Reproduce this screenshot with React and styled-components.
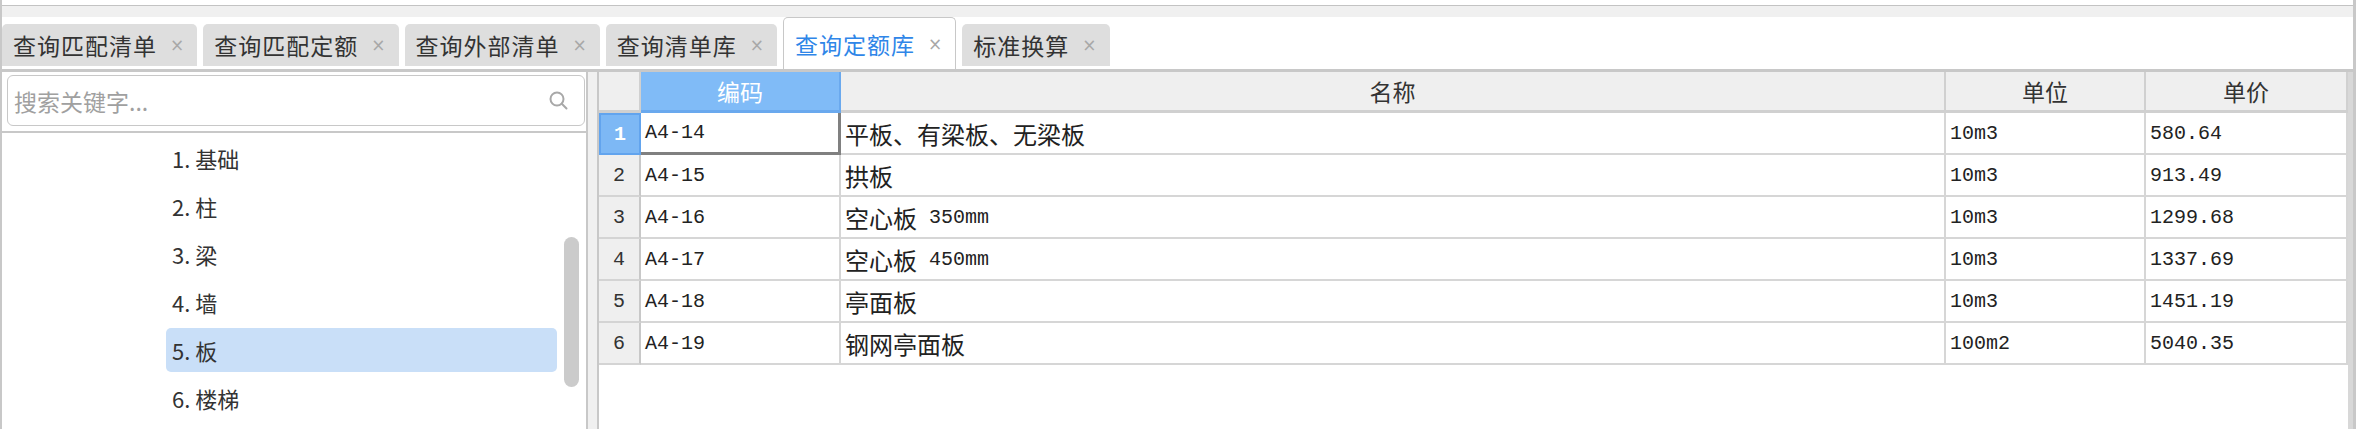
import React from "react";
import styled, { createGlobalStyle } from "styled-components";

const GlobalStyle = createGlobalStyle`
  html, body {
    margin: 0;
    padding: 0;
    background: #fff;
  }
  body {
    font-family: "Noto Sans CJK SC", "Noto Sans", sans-serif;
    color: #333;
  }
  * { box-sizing: border-box; }
`;

const Page = styled.div`
  width: 2356px;
  height: 429px;
  overflow: hidden;
  display: flex;
  flex-direction: column;
  border-left: 2px solid #c8c8c8;
  border-right: 3px solid #c8c8c8;
`;

const TopBox = styled.div`
  flex: none;
  height: 6px;
  border-bottom: 1px solid #c3c3c3;
`;

const Strip = styled.div`
  flex: none;
  height: 11px;
  background: #f0f0f0;
`;

const TabBar = styled.div`
  flex: none;
  height: 52px;
  display: flex;
  align-items: flex-end;
  gap: 6px;
`;

const Tab = styled.div`
  display: flex;
  align-items: center;
  height: ${p => (p.active ? 52 : 42)}px;
  margin-bottom: ${p => (p.active ? 0 : 3)}px;
  padding: 0 13px 0 11px;
  border-radius: 5px 5px 0 0;
  background: ${p => (p.active ? "#fff" : "#dedede")};
  border: ${p => (p.active ? "1px solid #c8c8c8" : "none")};
  border-bottom: none;
  color: ${p => (p.active ? "#2f86e8" : "#333")};
  font-size: 23px;
  letter-spacing: 1px;
  white-space: nowrap;
`;

const Close = styled.span`
  margin-left: 13px;
  color: #a8a8a8;
  font-family: "DejaVu Sans", sans-serif;
  font-size: 17px;
  letter-spacing: 0;
`;

const Main = styled.div`
  flex: 1;
  display: flex;
  border-top: 3px solid #c8c8c8;
  min-height: 0;
`;

const LeftPanel = styled.div`
  flex: none;
  width: 586px;
  display: flex;
  flex-direction: column;
  border-right: 2px solid #c8c8c8;
`;

const SearchWrap = styled.div`
  padding: 3px 1px 5px 5px;
`;

const SearchBox = styled.div`
  height: 51px;
  display: flex;
  align-items: center;
  justify-content: space-between;
  padding: 0 15px 0 6px;
  border: 1px solid #c8c8c8;
  border-radius: 6px;
  color: #a0a0a0;
  font-size: 23px;
`;

const List = styled.div`
  position: relative;
  flex: 1;
  display: flex;
  flex-direction: column;
  gap: 4px;
  padding-top: 3px;
  border-top: 2px solid #c8c8c8;
`;

const Item = styled.div`
  display: flex;
  align-items: center;
  height: 44px;
  width: 391px;
  margin-left: 164px;
  padding-left: 6px;
  border-radius: 5px;
  font-size: 22px;
  color: #333;
  background: ${p => (p.selected ? "#c9dff8" : "transparent")};
`;

const Thumb = styled.div`
  position: absolute;
  left: 562px;
  top: 104px;
  width: 15px;
  height: 150px;
  border-radius: 8px;
  background: #cbcbcb;
`;

const Splitter = styled.div`
  flex: none;
  width: 11px;
  background: #f0f0f0;
  border-right: 2px solid #c8c8c8;
`;

const GridArea = styled.div`
  flex: none;
  width: 1749px;
`;

const Grid = styled.div`
  display: grid;
  grid-template-columns: 42px 200px 1105px 200px 202px;
  grid-auto-rows: 42px;
  grid-template-rows: 41px;
`;

const HeadCell = styled.div`
  display: flex;
  align-items: center;
  justify-content: center;
  background: ${p => (p.selected ? "#80bbf7" : "#efefef")};
  color: ${p => (p.selected ? "#fff" : "#333")};
  border-right: 2px solid ${p => (p.selected ? "#6aa9ee" : "#d0d0d0")};
  border-bottom: 3px solid ${p => (p.selected ? "#6aa9ee" : "#d0d0d0")};
  font-size: 23px;
`;

const RowHead = styled.div`
  display: flex;
  align-items: center;
  justify-content: center;
  background: ${p => (p.selected ? "#7db8f5" : "#efefef")};
  color: ${p => (p.selected ? "#fff" : "#333")};
  border: ${p => (p.selected ? "2px solid #62a4ee" : "none")};
  border-right: 2px solid ${p => (p.selected ? "#62a4ee" : "#c8c8c8")};
  border-bottom: 2px solid ${p => (p.selected ? "#62a4ee" : "#d4d4d4")};
  font-family: "Liberation Mono", monospace;
  font-weight: ${p => (p.selected ? 700 : 400)};
  font-size: 20px;
`;

const Cell = styled.div`
  display: flex;
  align-items: center;
  padding-left: 4px;
  white-space: pre;
  color: #222;
  font-size: 24px;
  border-right: ${p => (p.active ? "3px solid #808080" : "2px solid #d6d6d6")};
  border-bottom: ${p => (p.active ? "3px solid #808080" : "2px solid #d6d6d6")};
`;

const Latin = styled.span`
  font-family: "Liberation Mono", monospace;
  font-size: 20px;
`;

const RightGutter = styled.div`
  flex: none;
  width: 5px;
  background: #d8d8d8;
`;

const SearchIcon = () => (
  <svg width="21" height="21" viewBox="0 0 21 21" fill="none" stroke="#a8a8a8" strokeWidth="2">
    <circle cx="9" cy="9" r="6.5" />
    <path d="M13.8 13.8 L18.5 18.5" strokeLinecap="round" />
  </svg>
);

const tabs = ["查询匹配清单", "查询匹配定额", "查询外部清单", "查询清单库", "查询定额库", "标准换算"];
const categories = ["1. 基础", "2. 柱", "3. 梁", "4. 墙", "5. 板", "6. 楼梯"];
const columns = ["编码", "名称", "单位", "单价"];
const rows = [
  ["A4-14", "平板、有梁板、无梁板", "10m3", "580.64"],
  ["A4-15", "拱板", "10m3", "913.49"],
  ["A4-16", "空心板 350mm", "10m3", "1299.68"],
  ["A4-17", "空心板 450mm", "10m3", "1337.69"],
  ["A4-18", "亭面板", "10m3", "1451.19"],
  ["A4-19", "钢网亭面板", "100m2", "5040.35"],
];

// ascii runs get the narrow mono font, the rest stays CJK
const mixed = (text) =>
  text.split(/([\x20-\x7e]+)/).filter(Boolean).map((part, i) =>
    /^[\x20-\x7e]+$/.test(part) ? <Latin key={i}>{part}</Latin> : <span key={i}>{part}</span>
  );

export default function App() {
  return (
    <>
      <GlobalStyle />
      <Page>
        <TopBox />
        <Strip />
        <TabBar>
          {tabs.map((t, i) => (
            <Tab key={t} active={i === 4}>
              {t}
              <Close>×</Close>
            </Tab>
          ))}
        </TabBar>
        <Main>
          <LeftPanel>
            <SearchWrap>
              <SearchBox>
                <span>搜索关键字...</span>
                <SearchIcon />
              </SearchBox>
            </SearchWrap>
            <List>
              {categories.map((c, i) => (
                <Item key={c} selected={i === 4}>{c}</Item>
              ))}
              <Thumb />
            </List>
          </LeftPanel>
          <Splitter />
          <GridArea>
            <Grid>
              <HeadCell />
              {columns.map((c, i) => (
                <HeadCell key={c} selected={i === 0}>{c}</HeadCell>
              ))}
              {rows.map((r, ri) => (
                <React.Fragment key={r[0]}>
                  <RowHead selected={ri === 0}>{ri + 1}</RowHead>
                  {r.map((v, ci) => (
                    <Cell key={ci} active={ri === 0 && ci === 0}>{mixed(v)}</Cell>
                  ))}
                </React.Fragment>
              ))}
            </Grid>
          </GridArea>
          <RightGutter />
        </Main>
      </Page>
    </>
  );
}
